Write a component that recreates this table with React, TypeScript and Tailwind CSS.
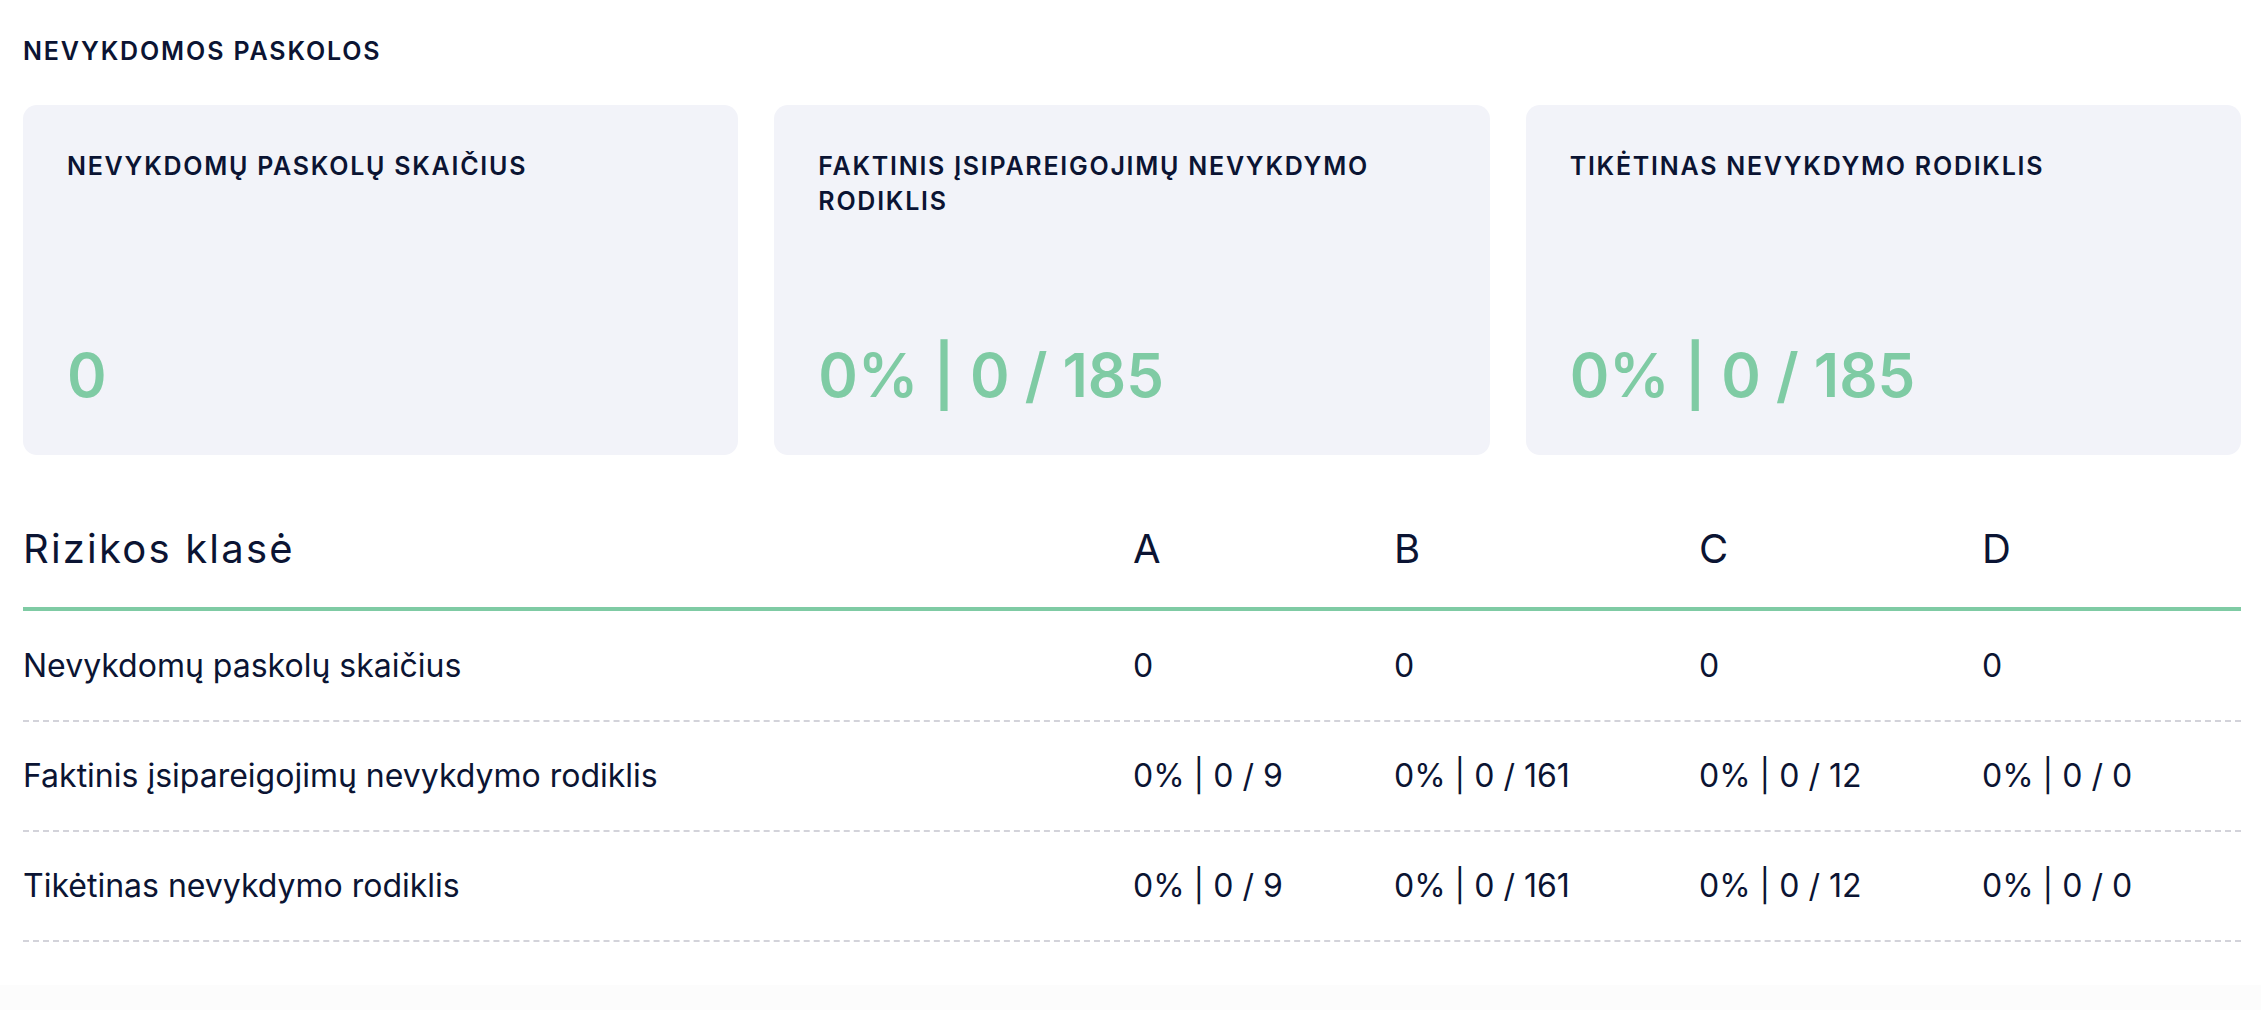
const cards = [
  { label: 'Nevykdomų paskolų skaičius', value: '0' },
  { label: 'Faktinis įsipareigojimų nevykdymo rodiklis', value: '0% | 0 / 185' },
  { label: 'Tikėtinas nevykdymo rodiklis', value: '0% | 0 / 185' },
];

const classes = ['A', 'B', 'C', 'D'];

const rows = [
  { label: 'Nevykdomų paskolų skaičius', values: ['0', '0', '0', '0'] },
  { label: 'Faktinis įsipareigojimų nevykdymo rodiklis', values: ['0% | 0 / 9', '0% | 0 / 161', '0% | 0 / 12', '0% | 0 / 0'] },
  { label: 'Tikėtinas nevykdymo rodiklis', values: ['0% | 0 / 9', '0% | 0 / 161', '0% | 0 / 12', '0% | 0 / 0'] },
];

// column widths taken from the risk class table
const gridCols = 'grid grid-cols-[1110px_261px_305px_283px_1fr]';

export default function App() {
  return (
    <div className="min-h-screen bg-white font-['Inter',sans-serif] text-[#0b1433]">
      <div className="pl-[23px] pr-[20px] pt-[35px]">
        <h2 className="text-[25px] leading-[32px] font-semibold uppercase tracking-[0.075em]">
          Nevykdomos paskolos
        </h2>

        <div className="mt-[38px] grid grid-cols-3 gap-[36px]">
          {cards.map((card) => (
            <div
              key={card.label}
              className="flex h-[350px] flex-col justify-between rounded-[14px] bg-[#f2f3f9] p-[44px]"
            >
              <p className="text-[25px] leading-[35px] font-semibold uppercase tracking-[0.07em]">
                {card.label}
              </p>
              <p className="text-[60px] leading-[72px] font-semibold text-[#7fcba4]">{card.value}</p>
            </div>
          ))}
        </div>

        <div className="mt-[36px]">
          <div className={`${gridCols} h-[120px] items-center border-b-4 border-[#7fcba4]`}>
            <div className="text-[40px] leading-[48px] tracking-[0.055em]">Rizikos klasė</div>
            {classes.map((c) => (
              <div key={c} className="text-[40px] leading-[48px]">
                {c}
              </div>
            ))}
          </div>

          {rows.map((row, i) => (
            <div
              key={row.label}
              className={`${gridCols} ${i === 0 ? 'h-[111px]' : 'h-[110px]'} items-center border-b-2 border-dashed border-[#d3d3da]`}
            >
              <div className="text-[32px] leading-[40px]">{row.label}</div>
              {row.values.map((v, j) => (
                <div key={j} className="text-[32px] leading-[40px]">
                  {v}
                </div>
              ))}
            </div>
          ))}
        </div>
      </div>
      <div className="mt-[43px] h-[30px] bg-[#fcfcfc]" />
    </div>
  );
}
